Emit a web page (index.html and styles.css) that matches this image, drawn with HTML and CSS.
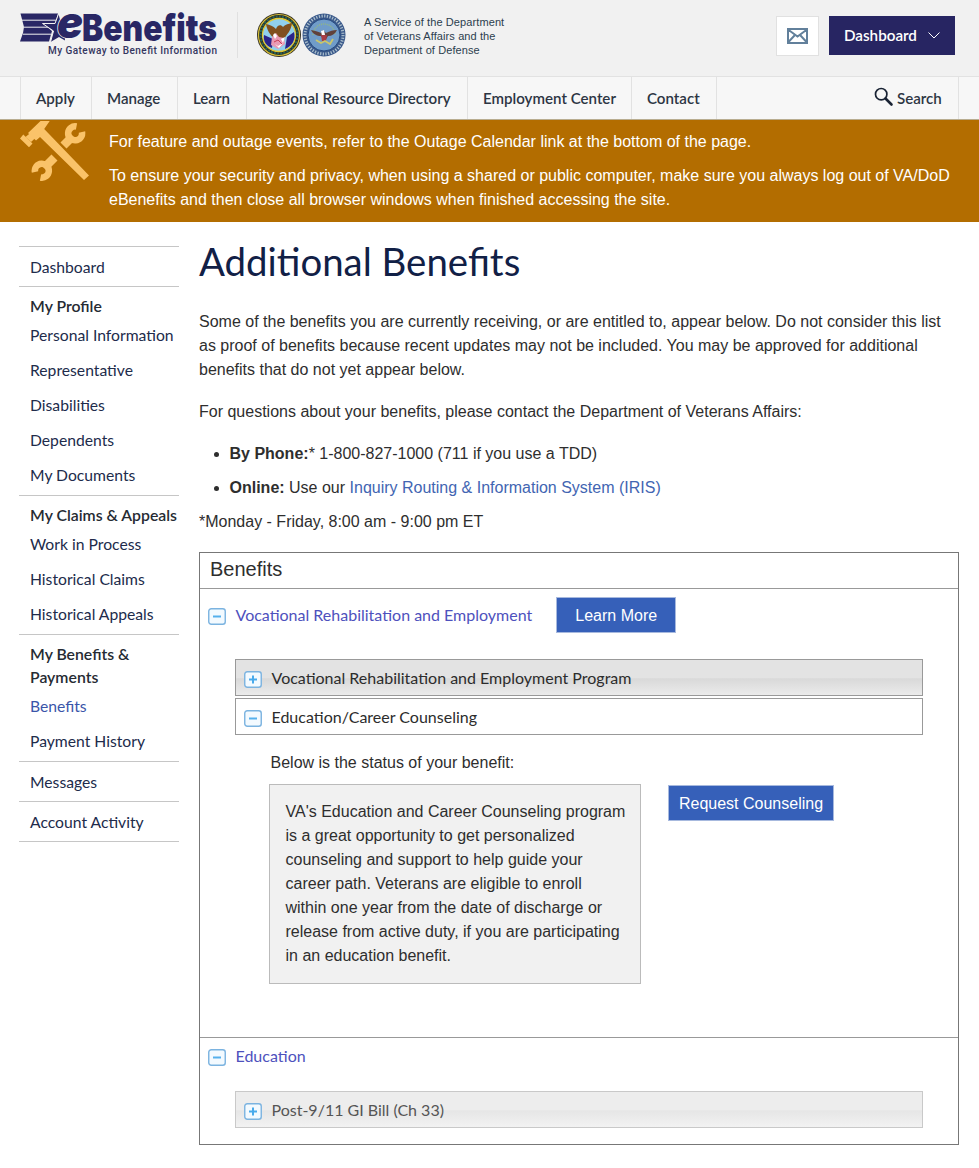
FILE: index.html
```html
<!DOCTYPE html>
<html lang="en">
<head>
<meta charset="utf-8">
<title>Additional Benefits - eBenefits</title>
<link rel="stylesheet" href="styles.css">
</head>
<body>
<svg class="defs" width="0" height="0" aria-hidden="true">
  <symbol id="minus" viewBox="0 0 18 17"><rect x=".75" y=".75" width="16.5" height="15.5" rx="2.5" fill="#f3faff" stroke="#7bb3e0" stroke-width="1.4"/><path d="M5 8.5h8" stroke="#55b0ec" stroke-width="2"/></symbol>
  <symbol id="plus" viewBox="0 0 18 17"><rect x=".75" y=".75" width="16.5" height="15.5" rx="2.5" fill="#f3faff" stroke="#7bb3e0" stroke-width="1.4"/><path d="M5 8.5h8M9 4.5v8" stroke="#48aaeb" stroke-width="2"/></symbol>
</svg>
<header class="header">
  <svg class="logo" viewBox="0 0 200 46" width="200" height="46">
    <path d="M.5.500H38L35 10.500H23l9 7.500-3 10.500H0L3 20 4 14z" fill="#292765"/>
    <path d="M1 7.200h35M4 14.200h24M3 21.200h28" stroke="#f1f1f1" stroke-width="1"/>
    <path d="M38.500 1l2.500 9.500 7 1-4 7 1 9-6-3.500L30.500 29l3-11-11-7.500H35z" fill="#292765"/>
    <path d="M38.500 1L35 10.500H22.500l11 7.500-3 11" fill="none" stroke="#f1f1f1" stroke-width="1"/>
    <text x="37" y="25" class="logo-e" textLength="26" lengthAdjust="spacingAndGlyphs">e</text>
    <text x="62" y="28" class="logo-name" textLength="135" lengthAdjust="spacingAndGlyphs">Benefits</text>
    <text x="28" y="40.500" class="logo-tag" textLength="169">My Gateway to Benefit Information</text>
  </svg>
  <div class="header-rule"></div>
  <svg class="seals" viewBox="0 0 90 45" width="90" height="45">
    <circle cx="22" cy="22" r="22" fill="#342f20"/>
    <circle cx="22" cy="22" r="20.500" fill="none" stroke="#d4bd39" stroke-width="1.200"/>
    <circle cx="22" cy="22" r="18.500" fill="none" stroke="#24655c" stroke-width="2" stroke-dasharray="2 1.200"/>
    <circle cx="22" cy="22" r="16.500" fill="#91d0ed" stroke="#e2c933" stroke-width="1.300"/>
    <path d="M7 22l9 4-1 9C9 33 6 28 7 22zM37 19l-7 5-2 12c7-3 11-9 9-17z" fill="#2c2489"/>
    <path d="M9 11c4 1 7 2 10 5 1-4 5-5 7-2 3-3 5-3 9-4-1 8-5 11-8 16l-6 2-4-3C13 22 10 17 9 11z" fill="#80501f"/>
    <path d="M15 24l4-4 3 4 5 1 1 6-7 5-7-4z" fill="#e99ab4"/>
    <path d="M16 22l2-2 2 3-2 3zM24 26l4-2-2 6zM18 31l3 2 5-3-4 5z" fill="#fff"/>
    <path d="M17 29l4-2 4 4" stroke="#ca3d56" fill="none"/>
    <circle cx="67" cy="22" r="21.500" fill="#39588a"/>
    <circle cx="67" cy="22" r="19" fill="none" stroke="#a7bbca" stroke-width="3" stroke-dasharray="1.300 1.400"/>
    <circle cx="67" cy="22" r="16" fill="#709cc9" stroke="#26497f"/>
    <path d="M56 22a11 11 0 0 1 22 0" fill="none" stroke="#92b783" stroke-width="1.500" stroke-dasharray="1 1"/>
    <path d="M54 17c5 1 8 2 10 3l2-3 3 3c4-2 7-3 11-3-2 4-5 6-9 6l-3 5-4-5c-4 0-8-2-10-6z" fill="#61413b"/>
    <path d="M64 18l3-1 1 5-3 1z" fill="#fff"/><path d="M64 22h6l-1 6-2 1-2-1z" fill="#a83d45"/>
    <path d="M59 27l5 3 4-2 5 3 3-5" fill="none" stroke="#c9c66c" stroke-width="1.800"/>
  </svg>
  <p class="service">A Service of the Department<br>of Veterans Affairs and the<br>Department of Defense</p>
  <div class="actions">
    <a class="mail"><svg viewBox="0 0 21 16" width="21" height="16"><path d="M1 1h19v14H1zM1 1.500l9.500 7L20 1.500M1 14.500l6.500-7M20 14.500l-6.500-7" fill="none" stroke="#62809b" stroke-width="2"/></svg></a>
    <a class="dash">Dashboard<svg viewBox="0 0 12 7" width="12" height="7"><path d="M.5.500l5.500 5.500L11.500.500" fill="none" stroke="#fff"/></svg></a>
  </div>
</header>
<nav class="nav">
  <a class="n1">Apply</a><a class="n2">Manage</a><a class="n3">Learn</a><a class="n4">National Resource Directory</a><a class="n5">Employment Center</a><a class="n6">Contact</a>
  <a class="search"><svg viewBox="0 0 20 20" width="20" height="20"><circle cx="7.200" cy="7.200" r="5.700" fill="none" stroke="#192334" stroke-width="1.700"/><path d="M11.500 11.500l6 6" stroke="#192334" stroke-width="2.600" stroke-linecap="round"/></svg>Search</a>
</nav>
<section class="alert">
  <svg class="tools" viewBox="0 0 70 62" width="70" height="62">
    <path d="M20.500 1h9.200l-5.500 8L69 55.500 64 60 20 17l-4 3.500L8 13zM3.300 14.500L12.500 23.500 9 27.200 0 18.500z" fill="#fac369"/>
    <path d="M5.500 17l6-5 5 5-5.500 5z" fill="#fac369"/>
    <path d="M56.500 6.500A7 7 0 1 0 62 12M20.500 57.500A7 7 0 1 0 15 52" fill="none" stroke="#fac369" stroke-width="6.500"/>
    <path d="M53 16l-9.500 9.500M24 48l10.500-10.500" stroke="#fac369" stroke-width="8.500"/>
  </svg>
  <div>
    <p>For feature and outage events, refer to the Outage Calendar link at the bottom of the page.</p>
    <p>To ensure your security and privacy, when using a shared or public computer, make sure you always log out of VA/DoD eBenefits and then close all browser windows when finished accessing the site.</p>
  </div>
</section>
<div class="page">
  <aside class="side">
    <div class="single first"><a>Dashboard</a></div>
    <div class="group"><h2>My Profile</h2><a>Personal Information</a><a>Representative</a><a>Disabilities</a><a>Dependents</a><a>My Documents</a></div>
    <div class="group"><h2>My Claims &amp; Appeals</h2><a>Work in Process</a><a>Historical Claims</a><a>Historical Appeals</a></div>
    <div class="group"><h2>My Benefits &amp;<br>Payments</h2><a class="current">Benefits</a><a>Payment History</a></div>
    <div class="single"><a>Messages</a></div>
    <div class="single"><a>Account Activity</a></div>
  </aside>
  <main class="main">
    <h1>Additional Benefits</h1>
    <p class="intro">Some of the benefits you are currently receiving, or are entitled to, appear below. Do not consider this list<br>as proof of benefits because recent updates may not be included. You may be approved for additional<br>benefits that do not yet appear below.</p>
    <p class="contact">For questions about your benefits, please contact the Department of Veterans Affairs:</p>
    <ul class="ways">
      <li><b>By Phone:</b>* 1-800-827-1000 (711 if you use a TDD)</li>
      <li><b>Online:</b> Use our <a>Inquiry Routing &amp; Information System (IRIS)</a></li>
    </ul>
    <p class="hours">*Monday - Friday, 8:00 am - 9:00 pm ET</p>
    <section class="panel">
      <h2 class="panel-title">Benefits</h2>
      <div class="category voc">
        <div class="cat-head"><svg class="toggle"><use href="#minus"/></svg><a>Vocational Rehabilitation and Employment</a><button class="btn learn">Learn More</button></div>
        <div class="bar shaded"><svg class="toggle"><use href="#plus"/></svg>Vocational Rehabilitation and Employment Program</div>
        <div class="bar open"><svg class="toggle"><use href="#minus"/></svg>Education/Career Counseling</div>
        <p class="status">Below is the status of your benefit:</p>
        <div class="detail">
          <p class="note">VA's Education and Career Counseling program<br>is a great opportunity to get personalized<br>counseling and support to help guide your<br>career path. Veterans are eligible to enroll<br>within one year from the date of discharge or<br>release from active duty, if you are participating<br>in an education benefit.</p>
          <button class="btn request">Request Counseling</button>
        </div>
      </div>
      <div class="category edu">
        <div class="cat-head"><svg class="toggle"><use href="#minus"/></svg><a>Education</a></div>
        <div class="bar shaded muted"><svg class="toggle"><use href="#plus"/></svg>Post-9/11 GI Bill (Ch 33)</div>
      </div>
    </section>
  </main>
</div>
</body>
</html>
```
FILE: styles.css
```css
* { box-sizing: border-box; }
body { margin: 0; background: #fff; color: #2e2e2e; font: 16px/24px "Liberation Sans", Arial, sans-serif; }
h1, h2, p, ul { margin: 0; }
svg { display: block; flex: none; }
.defs { display: none; }

.header { display: flex; align-items: flex-start; height: 76px; padding-left: 20px; background: #f1f1f1; }
.logo { margin-top: 13px; overflow: visible; }
.logo text { fill: #292765; }
.logo .logo-e { font: italic 900 44px Inter, sans-serif; stroke: #f1f1f1; stroke-width: 1.6px; paint-order: stroke; }
.logo-name { font: 900 37px Inter, sans-serif; }
.logo text.logo-tag { font: 500 10px Roboto, sans-serif; fill: #34365f; }
.header-rule { width: 1px; height: 46px; margin: 12px 0 0 17px; background: #e0e0e0; }
.seals { margin: 13px 0 0 19px; }
.service { margin: 15px 0 0 17px; color: #2c3e4e; font-size: 11px; line-height: 14px; letter-spacing: .1px; }
.actions { display: flex; gap: 10px; margin: 16px 24px 0 auto; }
.mail { display: flex; width: 43px; height: 40px; align-items: center; justify-content: center; background: #fff; border: 1px solid #e1e1e1; }
.dash { display: flex; width: 126px; height: 39px; padding: 0 15px 1px; align-items: center; justify-content: space-between; background: #272562; color: #fff; font: 600 15.2px Lato, sans-serif; }

.nav { display: flex; height: 44px; padding-left: 20px; background: #f7f7f7; border-top: 1px solid #e2e2e2; border-bottom: 1px solid #b9ad90; color: #2c3543; font: 600 15.1px/43px Lato, sans-serif; }
.nav a { padding-left: 15px; border-left: 1px solid #e2e2e2; white-space: nowrap; }
.n1 { width: 71px; }
.n2 { width: 86px; }
.n3 { width: 69px; }
.n4 { width: 221px; }
.n5 { width: 164px; }
.n6 { width: 85px; }
.nav .search { display: flex; width: 243px; padding-left: 157px; gap: 3px; border-right: 1px solid #e2e2e2; }
.search svg { margin-top: 10px; }

.alert { display: flex; height: 102px; padding-left: 20px; background: #b36d00; color: #fff; }
.alert > div { width: 860px; margin-left: 19px; padding-top: 10px; }
.alert p + p { margin-top: 10px; }

.page { display: flex; padding: 24px 20px 0 19px; }
.side { width: 160px; color: #212b4b; font: 15.7px/35px Lato, sans-serif; }
.side div { border-bottom: 1px solid #c6c6c6; padding-left: 11px; }
.side a { display: block; white-space: nowrap; }
.side .single { height: 40px; padding-top: 3px; }
.side .first { height: 41px; border-top: 1px solid #c6c6c6; }
.group { padding: 7px 0 2px; }
.group h2 { margin-bottom: 1px; color: #262b33; font: 600 15.8px/23px Lato, sans-serif; white-space: nowrap; }
.side .current { color: #3a55a9; }

.main { width: 760px; margin-left: 20px; }
.main h1 { height: 64px; color: #112046; font: 400 38.4px/30px Lato, sans-serif; }
.contact { margin-top: 18px; }
.ways { margin-top: 18px; padding-left: 30.5px; }
.ways li + li { margin-top: 10px; }
.ways a { color: #4265b2; }
.hours { margin-top: 10px; }

.panel { height: 593px; margin-top: 18px; border: 1px solid #777; }
.panel-title { height: 36px; padding-left: 10px; border-bottom: 1px solid #999; font: 400 20px/33px "Liberation Sans", Arial, sans-serif; }
.category { padding-left: 35px; }
.voc { height: 449px; padding-top: 8px; border-bottom: 1px solid #999; }
.cat-head { display: flex; margin-left: -27px; color: #4e51bd; font: 16px/36px Lato, sans-serif; }
.cat-head a { white-space: nowrap; }
.toggle { width: 18px; height: 17px; }
.cat-head .toggle { margin: 11px 9.5px 0 0; }
.btn { padding: 1px 0 0; height: 36px; border: 1px solid #a7b9de; background: #3660b9; color: #fff; font: 16px "Liberation Sans", Arial, sans-serif; }
.learn { width: 120px; margin-left: 24px; }
.bar { display: flex; width: 688px; height: 37px; padding-left: 8px; border: 1px solid #999; color: #2c2c2c; font: 16px/35px Lato, sans-serif; }
.bar .toggle { margin: 11px 9.5px 0 0; }
.shaded { margin-top: 26px; background: linear-gradient(#e3e3e3 50%, #d9d9d9 54%, #ebebeb); }
.open { margin-top: 2px; }
.muted { border-color: #c9c9c9; background: linear-gradient(#ededed 50%, #e6e6e6 54%, #f2f2f2); color: #555; }
.status { margin: 16px 0 9px 35.5px; }
.detail { display: flex; margin-left: 34px; }
.note { width: 372px; height: 200px; padding: 15px 15px 15px 15.5px; border: 1px solid #bbb; background: #f1f1f1; white-space: nowrap; }
.request { width: 166px; margin: 1px 0 0 27px; }
.edu .cat-head { height: 36px; }
.edu .shaded { margin-top: 17px; }
```
